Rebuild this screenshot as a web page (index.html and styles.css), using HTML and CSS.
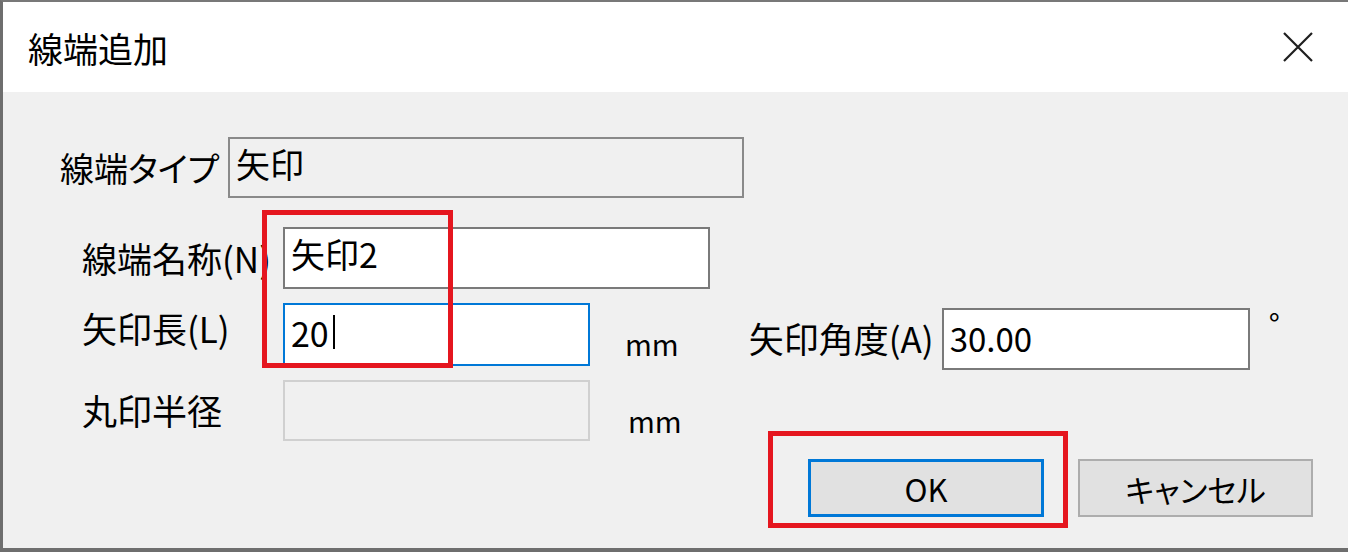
FILE: index.html
```html
<!DOCTYPE html>
<html lang="ja">
<head>
  <meta charset="UTF-8">
  <title>線端追加</title>
  <link rel="stylesheet" href="styles.css">
</head>
<body>

<div class="dialog">
  <div class="titlebar">
    <span class="title">線端追加</span>
    <svg class="close" width="32" height="32" viewBox="0 0 32 32">
      <path d="M2 2 L30 30 M30 2 L2 30" stroke="#1f1f1f" stroke-width="2.2" fill="none"/>
    </svg>
  </div>

  <div class="content">
    <div class="row row-type">
      <span class="label label-type">線端タイプ</span>
      <div class="field readonly">矢印</div>
    </div>

    <div class="row row-name">
      <span class="label label-clip">線端名称(N)</span>
      <div class="field wide">矢印2</div>
    </div>

    <div class="row row-len">
      <span class="label">矢印長(L)</span>
      <div class="field focused">20<span class="caret"></span></div>
      <span class="unit">mm</span>
      <span class="label-angle">矢印角度(A)</span>
      <div class="field angle">30.00</div>
      <span class="degree">°</span>
    </div>

    <div class="row row-radius">
      <span class="label">丸印半径</span>
      <div class="field disabled"></div>
      <span class="unit unit-low">mm</span>
    </div>

    <div class="buttons">
      <button class="btn btn-default">OK</button>
      <button class="btn">キャンセル</button>
    </div>

    <!-- annotation frames -->
    <div class="mark mark-name"></div>
    <div class="mark mark-ok"></div>
  </div>
</div>

</body>
</html>
```

FILE: styles.css
```css
html, body {
  margin: 0;
  padding: 0;
}

body {
  font-family: "Noto Sans CJK JP", "Noto Sans", sans-serif;
  color: #000;
  background: #f0f0f0;
}

.dialog {
  width: 1348px;
  height: 552px;
  box-sizing: border-box;
  border-top: 2px solid #787878;
  border-left: 3px solid #6e6e6e;
  border-bottom: 4px solid #6e6e6e;
  display: flex;
  flex-direction: column;
}

.titlebar {
  height: 90px;
  background: #fff;
  display: flex;
  align-items: center;
  justify-content: space-between;
  padding: 0 34px 0 25px;
}

.title {
  font-size: 35px;
  line-height: 50px;
  margin-top: 2px;
}

.close {
  display: block;
}

.content {
  flex: 1;
  position: relative;
  background: #f0f0f0;
  padding: 45px 0 0 57px;
}

.row {
  display: flex;
  align-items: center;
}

.label {
  width: 188px;
  margin-left: 22px;
  margin-right: 13px;
  font-size: 35px;
  line-height: 50px;
  white-space: nowrap;
}

/* the name label is cut by its field, as in the dialog */
.label-clip {
  overflow: hidden;
}

.label-type {
  width: 160px;
  margin-left: 0;
  margin-right: 8px;
  font-size: 34px;
  font-feature-settings: "palt";
}

.field {
  box-sizing: border-box;
  height: 62px;
  width: 307px;
  border: 2px solid #7a7a7a;
  background: #fff;
  padding: 7px 6px 0;
  font-size: 34px;
  line-height: 36px;
  white-space: nowrap;
}

.readonly {
  width: 516px;
  height: 61px;
  background: #f0f0f0;
  border-color: #8a8a8a;
}

.wide {
  width: 427px;
}

.focused {
  height: 63px;
  border-color: #0078d7;
  padding-top: 10px;
}

.caret {
  display: inline-block;
  width: 2px;
  height: 34px;
  background: #000;
  vertical-align: top;
  margin-left: 4px;
}

.angle {
  width: 308px;
  align-self: flex-start;
  margin-top: 5px;
  padding-top: 10px;
  font-size: 33px;
}

.disabled {
  height: 61px;
  background: #f0f0f0;
  border-color: #d0d0d0;
}

.row-name {
  margin-top: 29px;
}

.row-len {
  margin-top: 14px;
  height: 67px;
  align-items: flex-start;
}

.row-len .label {
  margin-top: 0;
}

.unit {
  font-size: 29px;
  line-height: 40px;
  margin-left: 35px;
  margin-top: 20px;
}

.unit-low {
  margin-left: 38px;
  margin-top: 20px;
}

.label-angle {
  font-size: 35px;
  line-height: 50px;
  margin-left: 70px;
  margin-right: 8px;
  margin-top: 10px;
  white-space: nowrap;
}

.degree {
  font-size: 30px;
  line-height: 40px;
  margin-left: 19px;
  margin-top: 0;
}

.row-radius {
  margin-top: 10px;
  align-items: flex-start;
}

.row-radius .label {
  margin-top: 5px;
}

.buttons {
  display: flex;
  gap: 34px;
  margin-top: 18px;
  padding-left: 748px;
}

.btn {
  box-sizing: border-box;
  width: 235px;
  height: 58px;
  background: #e1e1e1;
  border: 2px solid #adadad;
  font-family: "Noto Sans CJK JP", "Noto Sans", sans-serif;
  font-size: 31px;
  color: #000;
  padding: 0;
  font-feature-settings: "palt";
}

.btn-default {
  width: 236px;
  border: 3px solid #0078d7;
}

.mark {
  position: absolute;
  box-sizing: border-box;
  border: 5px solid #e5161f;
}

.mark-name {
  left: 259px;
  top: 118px;
  width: 191px;
  height: 158px;
}

.mark-ok {
  left: 765px;
  top: 339px;
  width: 300px;
  height: 97px;
}
```
